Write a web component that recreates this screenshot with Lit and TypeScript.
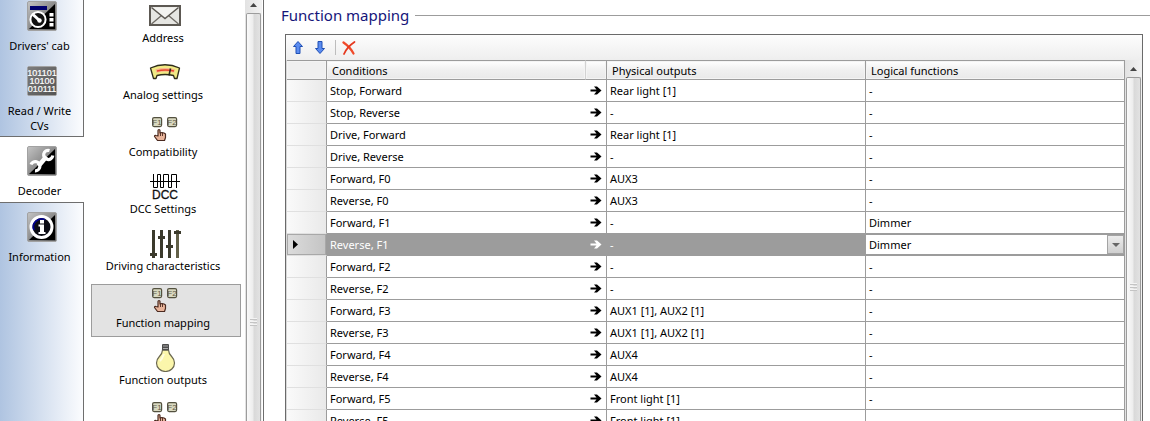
import { LitElement, html, css, svg, nothing } from "lit";
import { customElement, state } from "lit/decorators.js";
import { classMap } from "lit/directives/class-map.js";

const tile = (id: string, body: unknown) => html`
  <svg class="tile" viewBox="0 0 30 30" width="30" height="30" aria-hidden="true">
    <defs>
      <linearGradient id="g-${id}" x1="0" y1="0" x2="1" y2="1">
        <stop offset="0" stop-color="#c4c4c4" />
        <stop offset="0.5" stop-color="#8c8c8c" />
        <stop offset="1" stop-color="#5a5a5a" />
      </linearGradient>
    </defs>
    <rect x="0.5" y="0.5" width="29" height="29" rx="1.5" fill="url(#g-${id})" stroke="#a2a2a2" />
    ${body}
  </svg>
`;

const cabIcon = () => tile("cab", svg`
  <path d="M2 28 L28 3 V28 Z" fill="#000" />
  <rect x="3" y="5" width="17" height="4" fill="#00006e" />
  <circle cx="11" cy="18.5" r="7.6" fill="#111" stroke="#fff" stroke-width="2" />
  <path d="M6 13.5 L13 20" stroke="#fff" stroke-width="3" />
  <circle cx="12.5" cy="19.5" r="2.2" fill="#fff" />
  <path d="M22.5 12h4v3.500h-4zM22.5 17h4v3.500h-4zM22.500 22h4v3.500h-4z" fill="#fff" />
`);

const bitsIcon = () => tile("bits", svg`
  <rect x="1" y="1" width="28" height="28" fill="#505050" opacity="0.6" />
  <g fill="#fff" stroke="#fff" stroke-width="0.2" font-family="Liberation Sans Narrow, Liberation Sans, sans-serif" font-size="9" text-anchor="middle">
    <text x="15" y="9.500">101101</text>
    <text x="15" y="18">10100</text>
    <text x="15" y="26">010111</text>
  </g>
`);

const wrenchIcon = () => tile("wrench", svg`
  <path d="M2 28 L28 3 V28 Z" fill="#000" />
  <path d="M11.500 20 L19.500 10.500" stroke="#fff" stroke-width="4.500" />
  <path d="M22.500 4.500 A4.600 4.600 0 1 0 25.800 9.500" fill="none" stroke="#fff" stroke-width="3.200" />
  <path d="M4 18.500 A4.600 4.600 0 1 1 8 24.800" fill="none" stroke="#fff" stroke-width="3.200" />
`);

const infoIcon = () => tile("info", svg`
  <path d="M2 28 L28 3 V28 Z" fill="#000" />
  <circle cx="14.500" cy="15" r="10.500" fill="#0c0c14" stroke="#fff" stroke-width="3" />
  <path d="M7 18 A8 8 0 0 1 18 7.800" fill="none" stroke="#00008a" stroke-width="1.800" />
  <rect x="13" y="8" width="4" height="3.500" fill="#fff" />
  <path d="M11.500 12.500 H17 V20 H18.500 V22 H11.500 V20 H13 V14.500 H11.500 Z" fill="#fff" />
`);

const glyph = (body: unknown) => html`
  <svg class="glyph" viewBox="0 0 32 30" width="32" height="30" aria-hidden="true">${body}</svg>
`;

const envelopeIcon = () => glyph(svg`
  <rect x="1" y="6" width="30" height="19" fill="#e6e6e2" stroke="#5c5852" stroke-width="2" />
  <path d="M2.500 24 L12.500 15.500 M29.500 24 L19.500 15.500" stroke="#6e6a64" stroke-width="1.300" />
  <path d="M2.500 7.500 L16 18.500 L29.500 7.500" fill="#f3f3f0" stroke="#5c5852" stroke-width="1.500" />
`);

const gaugeIcon = () => glyph(svg`
  <path d="M1.500 11 Q16 4.500 30.500 11 L28 21.500 L25.500 21.500 L24.500 18.500 Q16 16.500 8 18.500 L7 21.500 L4.500 21.500 Z" fill="#f1ea84" stroke="#2e2c1a" stroke-width="1.300" stroke-linejoin="round" />
  <path d="M7 14 Q16 11.500 25.500 14" fill="none" stroke="#f8b58c" stroke-width="3.500" />
  <path d="M8 14 Q16 12 25 14" fill="none" stroke="#e8452c" stroke-width="1.300" />
  <path d="M20 18.500 L21.500 11.500" stroke="#2e2c1a" stroke-width="1.600" />
`);

const keysIcon = () => glyph(svg`
  <g fill="#d9d8c0" stroke="#53513f" stroke-width="1.200">
    <rect x="3.600" y="3.600" width="9" height="9" rx="1.500" />
    <rect x="18.600" y="3.600" width="9" height="9" rx="1.500" />
  </g>
  <g fill="#5b5946" font-family="Liberation Sans Narrow, Liberation Sans, sans-serif" font-size="8" text-anchor="middle">
    <text x="8" y="11">F1</text>
    <text x="23" y="11">F2</text>
  </g>
  <path d="M9 22 V16.500 Q9 15.500 10 15.500 Q11 15.500 11 16.500 V19 L13 18.500 L15 19 L16.500 20 V23.500 L15.500 26.500 H8.500 L5.500 22.500 Q5.500 21 7 21.500 Z" fill="#e9b49a" stroke="#4a2a20" stroke-width="1.200" stroke-linejoin="round" />
  <path d="M11.500 19 V22 M13.500 19 V22" stroke="#4a2a20" stroke-width="0.900" />
`);

const dccIcon = () => glyph(svg`
  <path d="M1 10.500 H31" stroke="#000" stroke-width="1" />
  <path d="M4.500 3 V16.500 H8.500 V3.500 H11.500 V16.500 H14.500 V3.500 H19.500 V16.500 H22.500 V3.500 H27.500 V17" fill="none" stroke="#000" stroke-width="1" />
  <text x="16" y="28" fill="#111" stroke="#111" stroke-width="0.300" font-family="Liberation Sans, sans-serif" font-size="12" text-anchor="middle">DCC</text>
`);

const slidersIcon = () => glyph(svg`
  <g fill="#3b3a2c">
    <rect x="3" y="2" width="3" height="28" /><rect x="1" y="25" width="7" height="3" />
    <rect x="11" y="2" width="3" height="28" /><rect x="9" y="8" width="7" height="3" />
    <rect x="19" y="2" width="3" height="28" /><rect x="17" y="17" width="7" height="3" />
    <rect x="27" y="2" width="3" height="28" fill="#626048" /><rect x="25" y="3" width="7" height="3" />
  </g>
`);

const bulbIcon = () => glyph(svg`
  <path d="M13.500 8 H19.500 Q19.500 11.500 23 15 Q25.500 17.500 25.500 21 A9 8.500 0 0 1 7.500 21 Q7.500 17.500 10 15 Q13.500 11.500 13.500 8 Z" fill="#fbf6ab" stroke="#6b6850" stroke-width="1.200" />
  <path d="M15 12 Q13 17 11 19" stroke="#fffde0" stroke-width="2" fill="none" />
  <rect x="13" y="2" width="7" height="6.500" rx="1" fill="#4c4c4c" />
  <path d="M14 4 H19 M14 6.500 H19" stroke="#b4b4b4" stroke-width="0.900" />
`);

const SECTIONS = [
  { label: "Drivers' cab", icon: cabIcon },
  { label: "Read / Write CVs", icon: bitsIcon },
  { label: "Decoder", icon: wrenchIcon },
  { label: "Information", icon: infoIcon },
];

const PAGES = [
  { label: "Address", icon: envelopeIcon },
  { label: "Analog settings", icon: gaugeIcon },
  { label: "Compatibility", icon: keysIcon },
  { label: "DCC Settings", icon: dccIcon },
  { label: "Driving characteristics", icon: slidersIcon },
  { label: "Function mapping", icon: keysIcon },
  { label: "Function outputs", icon: bulbIcon },
  { label: "", icon: keysIcon },
];

const ROWS = [
  ["Stop, Forward", "Rear light [1]", "-"],
  ["Stop, Reverse", "-", "-"],
  ["Drive, Forward", "Rear light [1]", "-"],
  ["Drive, Reverse", "-", "-"],
  ["Forward, F0", "AUX3", "-"],
  ["Reverse, F0", "AUX3", "-"],
  ["Forward, F1", "-", "Dimmer"],
  ["Reverse, F1", "-", "Dimmer"],
  ["Forward, F2", "-", "-"],
  ["Reverse, F2", "-", "-"],
  ["Forward, F3", "AUX1 [1], AUX2 [1]", "-"],
  ["Reverse, F3", "AUX1 [1], AUX2 [1]", "-"],
  ["Forward, F4", "AUX4", "-"],
  ["Reverse, F4", "AUX4", "-"],
  ["Forward, F5", "Front light [1]", "-"],
  ["Reverse, F5", "Front light [1]", "-"],
];

@customElement("scroll-bar")
export class ScrollBar extends LitElement {
  static styles = css`
    :host {
      display: flex;
      flex-direction: column;
      flex: none;
      width: 17px;
      box-sizing: border-box;
      padding: 0 1px;
      background: linear-gradient(90deg, #e2e2e2, #f2f2f2);
    }
    .up {
      display: grid;
      place-items: center;
      height: 17px;
      padding: 0;
      border: 0;
      background: none;
    }
    .thumb {
      flex: 1;
      display: grid;
      place-items: center;
      border: 1px solid #9c9c9c;
      border-bottom: 0;
      border-radius: 2px 2px 0 0;
      background: linear-gradient(90deg, #fafafa, #ededed 45%, #d9d9d9 55%, #e2e2e2);
    }
  `;

  render() {
    return html`
      <button class="up" aria-label="Scroll up">
        <svg width="7" height="4" viewBox="0 0 7 4"><path d="M0 4 L3.500 0 L7 4 Z" fill="#444" /></svg>
      </button>
      <div class="thumb">
        <svg width="7" height="8" viewBox="0 0 7 8">
          <path d="M0 1.500 H7 M0 4.500 H7 M0 7.500 H7" stroke="#c4c4c4" />
          <path d="M0 0.500 H7 M0 3.500 H7 M0 6.500 H7" stroke="#f4f4f4" />
        </svg>
      </div>
    `;
  }
}

@customElement("app-root")
export class AppRoot extends LitElement {
  @state() private section = 2;
  @state() private page = 5;
  @state() private row = 7;

  static styles = css`
    :host {
      display: flex;
      height: 100vh;
      overflow: hidden;
      background: #fff;
      color: #000;
      font: 11px/15px "Noto Sans", "Open Sans", sans-serif;
    }
    button {
      font: inherit;
      color: inherit;
    }
    .sections {
      flex: none;
      display: flex;
      flex-direction: column;
      width: 84px;
      margin-top: -8px;
    }
    .section {
      display: flex;
      flex-direction: column;
      align-items: center;
      gap: 7px;
      box-sizing: border-box;
      min-height: 65px;
      padding: 9px 4px 4px 0;
      border: 0;
      border-right: 1px solid #6e6e6e;
      background: linear-gradient(90deg, #afc4e1, #fbfcfe);
    }
    .section.before {
      border-bottom: 1px solid #6e6e6e;
      padding-bottom: 3px;
    }
    .section.active {
      min-height: 64px;
      border-right-color: #fff;
      background: #fff;
    }
    .section.after {
      border-top: 1px solid #6e6e6e;
    }
    .section:last-child {
      flex: 1;
    }
    .tile {
      flex: none;
      margin-left: 4px;
    }
    .pages {
      flex: none;
      display: flex;
      width: 180px;
      box-sizing: border-box;
      border-right: 1px solid #6e6e6e;
    }
    .list {
      flex: 1;
      display: flex;
      flex-direction: column;
      gap: 4px;
      margin-top: -1px;
      padding: 0 4px 0 7px;
    }
    .page {
      flex: none;
      display: flex;
      flex-direction: column;
      align-items: center;
      box-sizing: border-box;
      width: 150px;
      height: 53px;
      padding: 0 6px 0 0;
      border: 1px solid transparent;
      background: none;
      white-space: nowrap;
      line-height: 16px;
    }
    .page.active {
      border-color: #9c9c9c;
      background: #e3e3e3;
    }
    .glyph {
      flex: none;
      margin-left: 4px;
    }
    .pages scroll-bar {
      margin: -4px 2px -208px 0;
    }
    .main {
      flex: 1;
      min-width: 0;
      display: flex;
      flex-direction: column;
      padding-left: 17px;
    }
    .heading {
      flex: none;
      display: flex;
      align-items: center;
      gap: 6px;
      height: 30px;
    }
    .title {
      margin: 0;
      font-size: 15px;
      line-height: 30px;
      font-weight: 400;
      color: #15157a;
    }
    .rule {
      flex: 1;
      height: 1px;
      background: #9c9c9c;
    }
    .frame {
      flex: 1;
      min-height: 0;
      display: flex;
      flex-direction: column;
      margin: 4px 7px 0 4px;
      border: 1px solid #6a6a6a;
      border-bottom: 0;
    }
    .toolbar {
      flex: none;
      display: flex;
      align-items: center;
      height: 25px;
      padding-left: 1px;
      background: linear-gradient(#fdfdfd, #eeeeee);
    }
    .tool {
      display: grid;
      place-items: center;
      width: 22px;
      height: 22px;
      padding: 0;
      border: 0;
      background: none;
    }
    .divider {
      width: 1px;
      height: 15px;
      margin: 0 2px 0 4px;
      background: #bdbdbd;
    }
    .body {
      flex: 1;
      min-height: 0;
      display: flex;
    }
    .body scroll-bar {
      margin-bottom: -74px;
    }
    .view {
      flex: 1;
      min-width: 0;
      overflow: hidden;
      border-left: 1px solid #d8d8d8;
    }
    .grid {
      width: 100%;
      table-layout: fixed;
      border-collapse: separate;
      border-spacing: 0;
    }
    .c-mark { width: 40px; }
    .c-cond { width: 259px; }
    .c-arrow { width: 21px; }
    .c-out { width: 259px; }
    th, td {
      box-sizing: border-box;
      height: 22px;
      padding: 0 3px;
      border-right: 1px solid #9c9c9c;
      border-bottom: 1px solid #9c9c9c;
      text-align: left;
      font-weight: 400;
      white-space: nowrap;
      overflow: hidden;
    }
    thead th {
      height: 20px;
      padding: 0 5px;
      border-top: 1px solid #9c9c9c;
      background: linear-gradient(#fff, #f0f0f0 50%, #e9e9e9);
      box-shadow: inset 0 0 0 1px #f4f4f4;
    }
    thead .open {
      border-right-color: #d2d2d2;
    }
    .mark {
      padding: 0 6px;
      border-bottom-color: #e0e0e0;
      background: linear-gradient(90deg, #fafafa, #e9e9e9);
    }
    thead .mark {
      border-bottom-color: #9c9c9c;
      background: #f0f0f0;
    }
    .cond {
      border-right: 0;
    }
    .arrow {
      padding: 0 4px;
    }
    td svg, .mark svg {
      display: block;
    }
    .current td {
      background: #9c9c9c;
      color: #fff;
    }
    .current .mark {
      background: linear-gradient(90deg, #dcdcdc, #c4c4c4);
      box-shadow: inset 0 0 0 1px #a8a8a8;
    }
    .current .pick {
      padding: 0;
    }
    .combo {
      display: flex;
      align-items: center;
      height: 21px;
      box-sizing: border-box;
      border: 1px solid #9c9c9c;
      border-left: 0;
      border-right: 0;
      background: #fff;
    }
    .choice {
      appearance: none;
      flex: 1;
      min-width: 0;
      height: 19px;
      padding: 0 20px 0 3px;
      border: 0;
      border-radius: 0;
      outline: 0;
      background: none;
      color: #000;
      font: inherit;
    }
    .drop {
      flex: none;
      display: grid;
      place-items: center;
      width: 17px;
      height: 19px;
      box-sizing: border-box;
      border: 1px solid #a4a4a4;
      background: linear-gradient(#ececec, #cfcfcf);
      pointer-events: none;
    }
  `;

  private renderRow([cond, out, fn]: string[], i: number) {
    const current = i === this.row;
    return html`
      <tr class=${classMap({ current })} @click=${() => (this.row = i)}>
        <th class="mark" scope="row" aria-label=${cond}>
          ${current
            ? html`<svg width="5" height="9" viewBox="0 0 5 9"><path d="M0 0 L5 4.500 L0 9 Z" /></svg>`
            : nothing}
        </th>
        <td class="cond">${cond}</td>
        <td class="arrow">
          <svg width="12" height="9" viewBox="0 0 12 9">
            <path d="M0.500 3.500 H6.500 L4 0.500 H7 L11.500 4.500 L7 8.500 H4 L6.500 5.500 H0.500 Z" fill="currentColor" />
          </svg>
        </td>
        <td>${out}</td>
        ${current
          ? html`<td class="pick">
              <div class="combo">
                <select class="choice" aria-label="Logical functions">
                  <option>-</option>
                  <option ?selected=${fn === "Dimmer"}>Dimmer</option>
                </select>
                <span class="drop">
                  <svg width="8" height="4" viewBox="0 0 8 4"><path d="M0 0 H8 L4 4 Z" fill="#666" /></svg>
                </span>
              </div>
            </td>`
          : html`<td>${fn}</td>`}
      </tr>
    `;
  }

  render() {
    return html`
      <nav class="sections" aria-label="Sections">
        ${SECTIONS.map((s, i) => html`
          <button
            class=${classMap({
              section: true,
              active: i === this.section,
              before: i === this.section - 1,
              after: i === this.section + 1,
            })}
            @click=${() => (this.section = i)}
          >
            ${s.icon()}<span>${s.label}</span>
          </button>
        `)}
      </nav>
      <nav class="pages" aria-label="Decoder pages">
        <div class="list">
          ${PAGES.map((p, i) => html`
            <button class=${classMap({ page: true, active: i === this.page })} @click=${() => (this.page = i)}>
              ${p.icon()}<span>${p.label}</span>
            </button>
          `)}
        </div>
        <scroll-bar></scroll-bar>
      </nav>
      <main class="main">
        <header class="heading">
          <h1 class="title">Function mapping</h1>
          <span class="rule"></span>
        </header>
        <section class="frame">
          <div class="toolbar" role="toolbar">
            <button class="tool" aria-label="Move up">
              <svg width="10" height="13" viewBox="0 0 10 13"><path d="M5 0.500 L9.500 5.500 H7 V12.500 H3 V5.500 H0.500 Z" fill="#5b8cf0" stroke="#1f4fb4" /></svg>
            </button>
            <button class="tool" aria-label="Move down">
              <svg width="10" height="13" viewBox="0 0 10 13"><path d="M5 12.500 L9.500 7.500 H7 V0.500 H3 V7.500 H0.500 Z" fill="#5b8cf0" stroke="#1f4fb4" /></svg>
            </button>
            <span class="divider"></span>
            <button class="tool" aria-label="Delete">
              <svg width="14" height="14" viewBox="0 0 14 14">
                <path d="M1.500 1.500 Q8 6 11.500 12.500" fill="none" stroke="#f04a2a" stroke-width="2.200" stroke-linecap="round" />
                <path d="M12.500 1 Q5 6 2 13" fill="none" stroke="#e5391f" stroke-width="1.800" stroke-linecap="round" />
              </svg>
            </button>
          </div>
          <div class="body">
            <div class="view">
              <table class="grid">
                <colgroup>
                  <col class="c-mark" /><col class="c-cond" /><col class="c-arrow" /><col class="c-out" /><col />
                </colgroup>
                <thead>
                  <tr>
                    <th class="mark"></th>
                    <th class="open" scope="col">Conditions</th>
                    <th></th>
                    <th scope="col">Physical outputs</th>
                    <th scope="col">Logical functions</th>
                  </tr>
                </thead>
                <tbody>
                  ${ROWS.map((r, i) => this.renderRow(r, i))}
                </tbody>
              </table>
            </div>
            <scroll-bar></scroll-bar>
          </div>
        </section>
      </main>
    `;
  }
}
